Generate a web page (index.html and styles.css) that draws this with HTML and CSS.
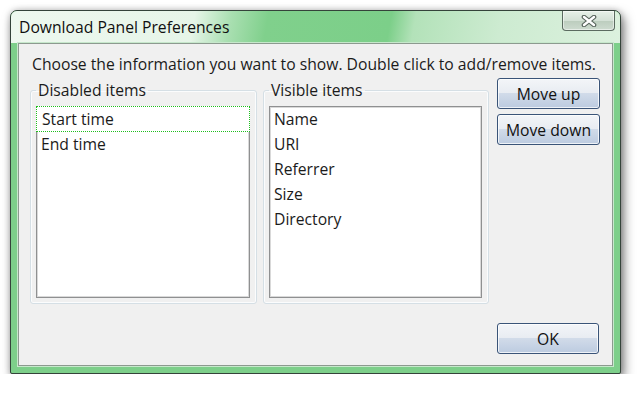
FILE: index.html
```html
<!DOCTYPE html>
<html lang="en">
<head>
  <meta charset="UTF-8">
  <title>Download Panel Preferences</title>
  <link rel="stylesheet" href="styles.css">
</head>
<body>

<div class="window">
  <div class="titlebar">
    <span class="title">Download Panel Preferences</span>
    <button class="close" title="Close">
      <svg width="16" height="12" viewBox="0 0 16 12">
        <path d="M3 2 L13 10 M13 2 L3 10" stroke="#56625a" stroke-width="4.6" stroke-linecap="round"/>
        <path d="M3 2 L13 10 M13 2 L3 10" stroke="#ffffff" stroke-width="2.4" stroke-linecap="round"/>
      </svg>
    </button>
  </div>

  <div class="client">
    <p class="hint">Choose the information you want to show. Double click to add/remove items.</p>

    <div class="panes">
      <fieldset class="group disabled">
        <legend>Disabled items</legend>
        <ul class="list">
          <li class="focus">Start time</li>
          <li>End time</li>
        </ul>
      </fieldset>

      <fieldset class="group visible">
        <legend>Visible items</legend>
        <ul class="list">
          <li>Name</li>
          <li>URI</li>
          <li>Referrer</li>
          <li>Size</li>
          <li>Directory</li>
        </ul>
      </fieldset>

      <div class="actions">
        <button class="btn">Move up</button>
        <button class="btn">Move down</button>
      </div>
    </div>

    <div class="footer">
      <button class="btn ok">OK</button>
    </div>
  </div>
</div>

</body>
</html>
```

FILE: styles.css
```css
body {
  margin: 0;
  padding: 10px 0 0 10px;
  background: #ffffff;
  font-family: 'Open Sans', 'Noto Sans', sans-serif;
  font-size: 15.7px;
  color: #1b1b1b;
}
.window {
  width: 611px;
  height: 364px;
  box-sizing: border-box;
  display: flex;
  flex-direction: column;
  border: 1px solid #34433a;
  border-radius: 7px 7px 2px 2px;
  background: #7dcf8a;
  box-shadow: 3px 5px 11px rgba(0,0,0,0.5), 0 0 6px rgba(0,0,0,0.2);
}
.titlebar {
  height: 32px;
  display: flex;
  align-items: flex-start;
  padding: 0 5px 0 8px;
  border-radius: 6px 6px 0 0;
  background: linear-gradient(100deg, #eef8ef 0%, #e6f5e8 30%, #a9dfb1 36%, #80d08c 42%, #7ccf89 62%, #b3e2b9 66%, #cdebd1 80%, #dcf1de 100%);
}
.title {
  align-self: center;
  line-height: 22px;
  color: #101010;
}
.close {
  margin-left: auto;
  width: 53px;
  height: 20px;
  padding: 0;
  border: 1px solid #5b6b60;
  border-top: none;
  border-radius: 0 0 4px 4px;
  background: linear-gradient(#e7f1e8, #d4e1d6 50%, #bccdbe 52%, #cddbcf);
  box-shadow: inset 0 0 0 1px rgba(255,255,255,0.5);
  display: flex;
  align-items: center;
  justify-content: center;
}
.client {
  flex: 1;
  margin: 0 7px 7px 7px;
  display: flex;
  flex-direction: column;
  border: 1px solid #8c9a8f;
  box-shadow: 0 0 0 1px #c7e8cc;
  background: #f0f0f0;
  padding: 9px 12px 11px 11px;
}
.hint {
  margin: 0 0 4px;
  padding-left: 2px;
  line-height: 22px;
  white-space: nowrap;
}
.panes {
  display: flex;
  align-items: flex-start;
}
.group {
  margin: 0;
  padding: 0 6px 5px 5px;
  border: 1px solid #d5dfe5;
  border-radius: 3px;
  box-shadow: inset 0 0 0 1px #fbfcfd;
  box-sizing: border-box;
}
.group legend {
  padding: 0 2px;
  line-height: 22px;
}
.disabled {
  width: 227px;
  margin-right: 6px;
}
.visible {
  width: 226px;
}
.list {
  list-style: none;
  margin: 5px 0 0;
  padding: 0;
  height: 192px;
  box-sizing: border-box;
  background: #ffffff;
  border: 1px solid #8f9091;
  box-shadow: inset 0 0 0 1px #d9d9d9;
}
.list li {
  height: 25px;
  line-height: 25px;
  padding-left: 4px;
}
.list li.focus {
  margin: -1px -1px 0;
  padding-left: 5px;
  height: 26px;
  box-sizing: border-box;
  background: #ffffff;
  border: 1px dotted #1fbf1f;
  line-height: 24px;
}
.actions {
  width: 103px;
  margin: -1px 0 0 8px;
  display: flex;
  flex-direction: column;
  gap: 5px;
}
.btn {
  height: 31px;
  width: 103px;
  padding: 0;
  font: inherit;
  color: #111;
  border: 1px solid #3a5478;
  border-radius: 3px;
  background: linear-gradient(#f3f5f8, #e8ecf2 48%, #d1dbe9 50%, #bccbe0);
  box-shadow: inset 0 0 0 1px rgba(255,255,255,0.75);
}
.footer {
  margin-top: auto;
  display: flex;
  justify-content: flex-end;
}
.ok {
  width: 102px;
  margin-right: 1px;
}
```
